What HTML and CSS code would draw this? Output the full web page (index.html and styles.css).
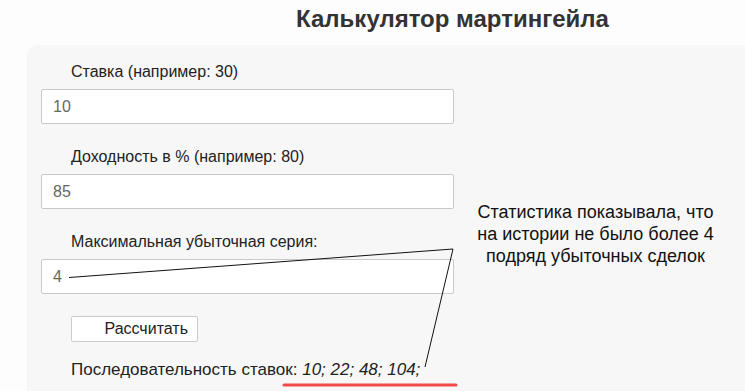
FILE: index.html
```html
<!DOCTYPE html>
<html lang="ru">
<head>
    <meta charset="UTF-8">
    <meta name="viewport" content="width=device-width, initial-scale=1.0">
    <title>Калькулятор мартингейла</title>
    <link rel="stylesheet" href="styles.css">
</head>
<body>

<h2 class="title">Калькулятор мартингейла</h2>

<div class="panel">
    <div class="field">
        <label>Ставка (например: 30)</label>
        <input type="text" value="10">
    </div>
    <div class="field">
        <label>Доходность в % (например: 80)</label>
        <input type="text" value="85">
    </div>
    <div class="field">
        <label>Максимальная убыточная серия:</label>
        <input type="text" value="4">
    </div>

    <button class="calc-btn">Рассчитать</button>

    <div class="result">Последовательность ставок: <i>10; 22; 48; 104;</i></div>
</div>

<!-- пометки поверх скриншота -->
<div class="note">Статистика показывала, что<br>на истории не было более 4<br>подряд убыточных сделок</div>
<svg class="marks" width="745" height="391" viewBox="0 0 745 391">
    <polyline points="69,277.5 453,249 425,367" fill="none" stroke="#111" stroke-width="1"/>
    <line x1="284" y1="385" x2="456" y2="385" stroke="#f24a4a" stroke-width="3" stroke-linecap="round"/>
</svg>

</body>
</html>
```

FILE: styles.css
```css
body {
    font-family: "Liberation Sans", Arial, sans-serif;
    background-color: #fdfdfd;
    color: #222;
    margin: 0;
    height: 391px;
    overflow: hidden;
}

.title {
    margin: 0;
    padding: 5px 0 0 160px;
    text-align: center;
    font-size: 24px;
    line-height: 28px;
    color: #333;
}

.panel {
    margin: 12px 0 0 27px;
    padding: 17px 0 0 14px;
    background: #f7f7f7;
    border-radius: 12px 0 0 0;
    height: 340px;
}

.field {
    margin-bottom: 23px;
}

.field label {
    display: block;
    font-size: 16px;
    line-height: 20px;
    padding-left: 30px;
    margin-bottom: 7px;
}

.field input {
    display: block;
    box-sizing: border-box;
    width: 413px;
    height: 35px;
    padding: 0 11px;
    border: 1px solid #c9c9c9;
    border-radius: 2px;
    background: white;
    color: #666;
    font-family: inherit;
    font-size: 16px;
}

.calc-btn {
    display: block;
    box-sizing: border-box;
    margin: -1px 0 0 30px;
    width: 127px;
    height: 26px;
    padding: 0 9px 0 0;
    text-align: right;
    background: white;
    border: 1px solid #ccc;
    border-radius: 2px;
    font-family: inherit;
    font-size: 16px;
    color: #222;
}

.result {
    margin: 18px 0 0 30px;
    font-size: 17px;
    line-height: 20px;
}

.note {
    position: absolute;
    left: 455px;
    top: 201px;
    width: 281px;
    text-align: center;
    font-size: 18px;
    line-height: 22px;
    color: #111;
}

.marks {
    position: absolute;
    left: 0;
    top: 0;
    pointer-events: none;
}
```
